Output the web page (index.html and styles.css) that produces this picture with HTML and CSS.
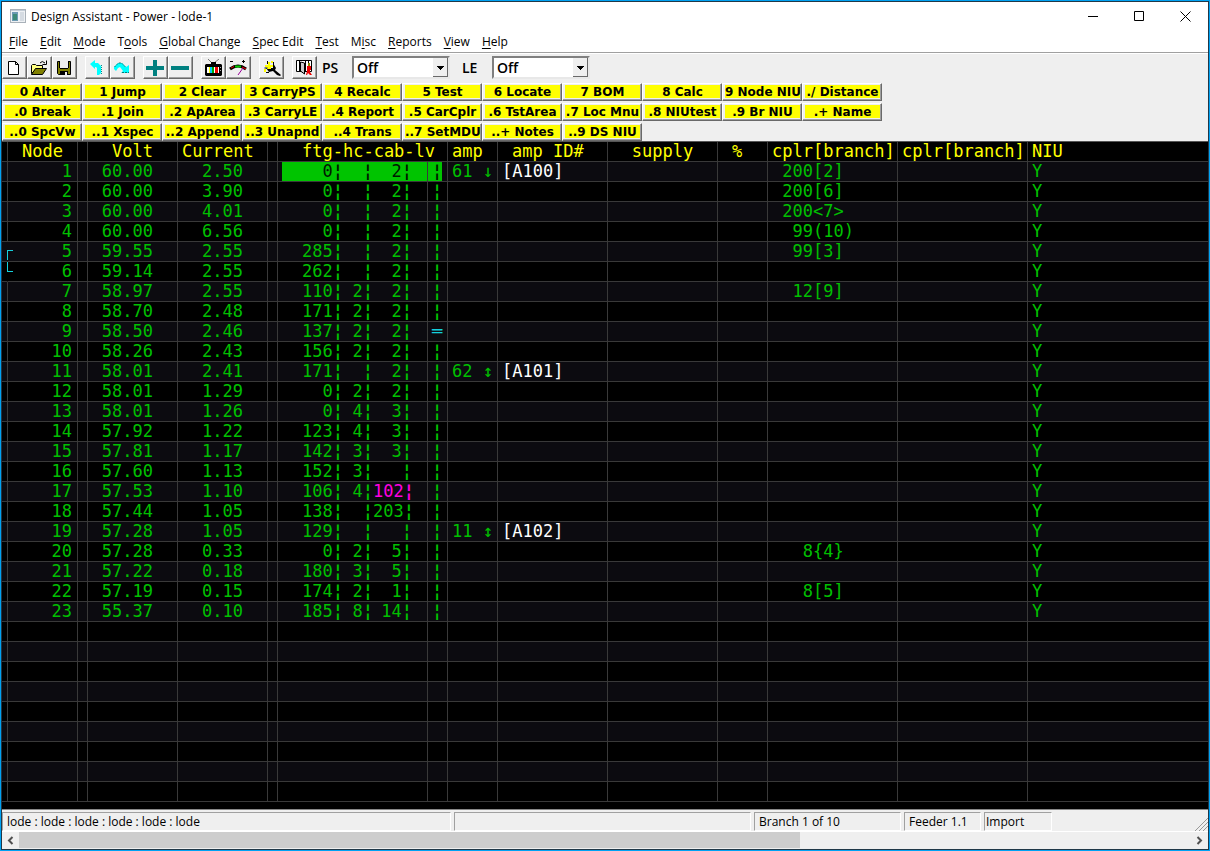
FILE: index.html
```html
<!DOCTYPE html>
<html lang="en">
<head>
<meta charset="utf-8">
<title>Design Assistant - Power - lode-1</title>
<link rel="stylesheet" href="styles.css">
</head>
<body>
<div class="window">
  <header class="titlebar">
    <svg class="app-icon" width="16" height="14" viewBox="0 0 16 14"><path fill="#a9b1b9" d="M0 0h16v14H0z"/><path fill="#eef1f4" d="M1 2h14v11H1z"/><path fill="#c3ccd6" d="M1 1h14v1H1z"/><path fill="#6c9ab2" d="M2 3h6v9H2z"/><path fill="#3d8a78" d="M3 5h4v6H3z"/><path fill="#d5dbe2" d="M10 3h4v9h-4z"/></svg>
    <h1 class="title">Design Assistant - Power - lode-1</h1>
    <div class="window-controls">
      <button aria-label="Minimize"><svg width="11" height="11" viewBox="0 0 11 11"><path fill="#000" d="M0 5h10v1H0z"/></svg></button>
      <button aria-label="Maximize"><svg width="11" height="11" viewBox="0 0 11 11"><path fill="none" stroke="#000" d="M.5 .5h9v9h-9z"/></svg></button>
      <button aria-label="Close"><svg width="11" height="11" viewBox="0 0 11 11"><path stroke="#000" d="M.5 .5l10 10M10.500 .5l-10 10"/></svg></button>
    </div>
  </header>

  <nav class="menubar" aria-label="Main menu">
    <button><u>F</u>ile</button><button><u>E</u>dit</button><button><u>M</u>ode</button><button>T<u>o</u>ols</button><button><u>G</u>lobal Change</button><button><u>S</u>pec Edit</button><button><u>T</u>est</button><button>M<u>i</u>sc</button><button><u>R</u>eports</button><button><u>V</u>iew</button><button><u>H</u>elp</button>
  </nav>

  <div class="toolbar">
    <div class="tool-group">
      <button class="tool" aria-label="New"><svg width="20" height="18" viewBox="0 0 20 18"><path fill="#fff" stroke="#000" d="M4.500 2.500h7l3 3v10h-10zM11.500 2.500v3h3"/></svg></button>
      <button class="tool" aria-label="Open"><svg width="20" height="18" viewBox="0 0 20 18"><path fill="#ffff80" stroke="#000" d="M2.500 14.500v-8l1-1h3l1 1h6v3h-6z"/><path fill="#808000" stroke="#000" d="M2.500 15.500l4-6h11l-4 6z"/><path fill="none" stroke="#000" d="M11 4q2-3 5 0M17.500 1.500v4h-4"/></svg></button>
      <button class="tool" aria-label="Save"><svg width="20" height="18" viewBox="0 0 20 18"><path fill="#808000" stroke="#000" d="M3.500 2.500h13v13h-12l-1-1z"/><path fill="#efefef" d="M6 2h8v7H6z"/><path fill="#000" d="M5 2h1v7H5zM14 2h1v7h-1zM6 9h8v1H6zM6 12h8v4H6z"/><path fill="#efefef" d="M11 13h2v3h-2z"/></svg></button>
    </div>
    <div class="tool-group">
      <button class="tool" aria-label="Back"><svg width="20" height="18" viewBox="0 0 20 18"><path fill="#0ff" d="M3 5l5-4v3h3l3 3v7l-2 2h-2V9L9 8H8v2z"/><path fill="none" stroke="#008b8b" stroke-dasharray="1 1" d="M14.500 6v9"/></svg></button>
      <button class="tool" aria-label="Forward"><svg width="20" height="18" viewBox="0 0 20 18"><path fill="#0ff" d="M2 10V8l4-4h4l4 4 3-2v8H9l2-2-3-4-2 1-2 3z"/><path fill="none" stroke="#087878" stroke-dasharray="2 1" d="M2.500 8l4-4h3l4 4M10 13.500h7"/></svg></button>
    </div>
    <div class="tool-group">
      <button class="tool" aria-label="Add"><svg width="20" height="18" viewBox="0 0 20 18"><path fill="#008080" d="M8 1h4v6h7v4h-7v6H8v-6H1V7h7z"/></svg></button>
      <button class="tool" aria-label="Remove"><svg width="20" height="18" viewBox="0 0 20 18"><path fill="#008080" d="M1 7h18v4H1z"/></svg></button>
    </div>
    <div class="tool-group">
      <button class="tool" aria-label="Television"><svg width="20" height="18" viewBox="0 0 20 18"><path fill="none" stroke="#777" d="M5 0l4 4h2l5-4"/><path fill="#000" d="M2 6l1-1h15l1 1v10l-1 1H3l-1-1zM8 3h5v2H8z"/><path fill="#fff" d="M4 8h12v6H4z"/><path fill="#ff0" d="M6 8h1v6H6z"/><path fill="#0cf" d="M7 8h2v6H7z"/><path fill="#0a0" d="M9 8h2v6H9z"/><path fill="#e00" d="M12 8h3v6h-3z"/><path fill="#aaa" d="M17 8h1v1h-1zM17 11h1v1h-1z"/></svg></button>
      <button class="tool" aria-label="Signal"><svg width="20" height="18" viewBox="0 0 20 18"><path fill="none" stroke="#000" stroke-width="3" d="M2 10q8-6 16 0"/><path fill="none" stroke="#e00" d="M3 9l3-1.500M14 8l4 2"/><path fill="none" stroke="#0c0" stroke-width="2" d="M7 7.500h6"/><path fill="none" stroke="#909" stroke-width="1" d="M15 9l-5 7"/><path stroke="#000" d="M2 2.500h3M14 2.500h3M15.500 1v3"/></svg></button>
    </div>
    <div class="tool-group">
      <button class="tool" aria-label="Find"><svg width="20" height="18" viewBox="0 0 20 18"><path fill="#000" d="M5 9h7V4l3 5-1 2 6 5-1 1-3-1-4-4-4 1z"/><path fill="#ff0" d="M7 3h2v3h3v2h-2v2H6V8H4V6h3zM3 10h2v3H3zM10 2h2v2h-2z"/><path fill="none" stroke="#000" d="M6.500 2v3M12.500 3v4M3.500 9h3M5 13.500h3"/></svg></button>
    </div>
    <div class="tool-group">
      <button class="tool" aria-label="Exit"><svg width="20" height="18" viewBox="0 0 20 18"><path fill="#fff" stroke="#000" d="M2.500 1.500h15v11h-15zM5.500 2v10M8.500 4v9M11.500 2v10M14.500 2v3"/><path fill="#ccc" stroke="#000" d="M6.500 3l4 1v11l-4-3z"/><path fill="#880" d="M14 4h2v3h-2z"/><path fill="#e00" d="M13 7h4v4h-1v2l2 3h-2l-2-2-1 2h-1l1-4z"/></svg></button>
    </div>
    <label class="combo-label" for="ps">PS</label>
    <select class="combo" id="ps"><option>Off</option></select>
    <label class="combo-label" for="le">LE</label>
    <select class="combo" id="le"><option>Off</option></select>
  </div>

  <div class="keys">
    <div class="key-row"><button>0 Alter</button><button>1 Jump</button><button>2 Clear</button><button>3 CarryPS</button><button>4 Recalc</button><button>5 Test</button><button>6 Locate</button><button>7 BOM</button><button>8 Calc</button><button>9 Node NIU</button><button>./ Distance</button></div>
    <div class="key-row"><button>.0 Break</button><button>.1 Join</button><button>.2 ApArea</button><button>.3 CarryLE</button><button>.4 Report</button><button>.5 CarCplr</button><button>.6 TstArea</button><button>.7 Loc Mnu</button><button>.8 NIUtest</button><button>.9 Br NIU</button><button>.+ Name</button></div>
    <div class="key-row"><button>..0 SpcVw</button><button>..1 Xspec</button><button>..2 Append</button><button>..3 Unapnd</button><button>..4 Trans</button><button>..7 SetMDU</button><button>..+ Notes</button><button>..9 DS NIU</button></div>
  </div>

  <main class="sheet">
    <table class="grid">
      <colgroup><col class="w6"><col class="w70"><col class="w10"><col class="w90"><col class="w90"><col class="w10"><col class="w65"><col class="w30"><col class="w55"><col class="w20"><col class="w50"><col class="w110"><col class="w110"><col class="w50"><col class="w130"><col class="w130"><col></colgroup>
      <thead><tr><th></th><th class="node-head">Node</th><th></th><th class="volt-head">Volt</th><th class="current-head">Current</th><th></th><th class="ftg-head" colspan="4">ftg-hc-cab-lv</th><th>amp</th><th class="id-head">amp ID#</th><th class="center">supply</th><th class="percent-head">%</th><th>cplr[branch]</th><th>cplr[branch]</th><th>NIU</th></tr></thead>
      <tbody id="rows"></tbody>
    </table>
  </main>

  <footer class="status">
    <div class="panel path">lode : lode : lode : lode : lode : lode</div>
    <div class="panel message"></div>
    <div class="panel branch">Branch 1 of 10</div>
    <div class="panel feeder">Feeder 1.1</div>
    <div class="panel import">Import</div>
    <svg class="grip" width="14" height="14" viewBox="0 0 14 14"><path stroke="#999" stroke-width="1" d="M1 14L14 1M5 14l9-9M9 14l5-5"/></svg>
  </footer>
  <div class="scrollbar">
    <button aria-label="Scroll left"><svg width="7" height="9" viewBox="0 0 7 9"><path fill="none" stroke="#505050" stroke-width="2" d="M5.500 1L2 4.500 5.500 8"/></svg></button>
    <div class="track"><div class="thumb"></div></div>
    <button aria-label="Scroll right"><svg width="7" height="9" viewBox="0 0 7 9"><path fill="none" stroke="#505050" stroke-width="2" d="M1.500 1L5 4.500 1.500 8"/></svg></button>
  </div>
</div>
<script src="grid.js"></script>
</body>
</html>
```
FILE: styles.css
```css
* { box-sizing: border-box; }
body { margin: 0; font-family: "Open Sans", "Noto Sans", sans-serif; font-size: 12px; color: #000; }
button { font: inherit; color: inherit; border: 0; padding: 0; margin: 0; background: none; }
svg { display: block; flex: none; }

.window { display: flex; flex-direction: column; min-height: 100vh; border: 1px solid #00a2f3; box-shadow: inset 0 0 0 1px #203848; padding: 1px; background: #efefef; }

.titlebar { display: flex; align-items: center; height: 28px; padding-left: 8px; background: #fff; }
.title { flex: 1; margin: 0 0 0 5px; font-size: 12px; font-weight: 400; }
.window-controls { display: flex; height: 100%; }
.window-controls button { display: flex; align-items: center; justify-content: center; width: 46px; }

.menubar { display: flex; gap: 12px; height: 22px; padding-left: 7px; background: #fff; line-height: 24px; }
.menubar button { line-height: 24px; }
.menubar u { text-underline-offset: 2px; }

.toolbar { display: flex; align-items: center; height: 31px; border-top: 1px solid #a0a0a0; box-shadow: inset 0 1px #fff; padding-bottom: 1px; }
.tool-group { display: flex; margin-right: 8px; }
.tool { display: flex; align-items: center; justify-content: center; width: 25px; height: 23px; padding-right: 1px; border: 1px solid; border-color: #fff #696969 #696969 #fff; box-shadow: inset -1px -1px #a0a0a0; background: #efefef; }
.combo-label { flex: none; width: 30px; font-size: 14px; font-weight: 600; margin-left: -3px; }
.combo { flex: none; width: 98px; height: 23px; margin-right: 15px; padding: 0 3px; font-family: inherit; font-size: 14px; font-weight: 600; color: #000; appearance: none; border: 2px solid; border-color: #808080 #e8e8e8 #e8e8e8 #808080; border-radius: 0;
  background: linear-gradient(#000, #000) no-repeat right 4px top 8px / 7px 1px, linear-gradient(#000, #000) no-repeat right 5px top 9px / 5px 1px, linear-gradient(#000, #000) no-repeat right 6px top 10px / 3px 1px, linear-gradient(#000, #000) no-repeat right 7px top 11px / 1px 1px, linear-gradient(#696969, #696969) no-repeat right / 1px 100%, linear-gradient(#696969, #696969) no-repeat bottom right / 15px 1px, linear-gradient(#efefef, #efefef) no-repeat right / 15px 100%, #fff; }

.keys { display: flex; flex-direction: column; gap: 2px; }
.key-row { display: flex; }
.key-row button { width: 80px; height: 18px; padding: 1px 1px 2px 2px; border: 1px solid; border-color: #fff #696969 #696969 #fff; box-shadow: inset -1px -1px #a0a0a0; background: #ff0 content-box; font-family: "DejaVu Sans", sans-serif; font-size: 12px; font-weight: 700; line-height: 15px; white-space: nowrap; }

.sheet { flex: 1; background: #000; border-top: 1px solid #555; }
.grid { width: 100%; table-layout: fixed; border-collapse: separate; border-spacing: 0; font-family: "DejaVu Sans Mono", monospace; font-size: 17px; line-height: 19px; }
.grid th, .grid td { height: 20px; padding: 0 0 0 4px; border: solid #393939; border-width: 0 1px 1px 0; font-weight: 400; text-align: left; white-space: pre; color: #00c000; }
.grid th:last-child, .grid td:last-child { border-right: 0; }
.grid th { color: #ff0; }
.grid tbody tr:nth-child(odd) { background: #0c0b10; }
.w6 { width: 6px; } .w10 { width: 10px; } .w20 { width: 20px; } .w30 { width: 30px; } .w50 { width: 50px; } .w55 { width: 55px; } .w65 { width: 65px; } .w70 { width: 70px; } .w90 { width: 90px; } .w110 { width: 110px; } .w130 { width: 130px; }
.grid .center { text-align: center; padding: 0; }
.grid .percent-head { padding-left: 14px; }
.grid .node-head { text-align: right; padding-right: 14px; }
.grid .volt-head, .grid .volt, .grid .current { text-align: right; padding-right: 24px; }
.grid .current-head { padding-left: 4px; }
.grid .id-head { padding-left: 14px; }
.grid .ftg-head { padding-left: 24px; }
.grid .node { text-align: right; padding-right: 5px; }
.grid .ftg, .grid .hc { text-align: right; border-right: 0; padding: 0; }
.grid .cab { text-align: right; padding: 0 15px 0 0; }
.grid .amp-id { color: #fff; }
.grid .magenta { color: #ff00e0; }
.grid .cyan { color: #14d0dc; }
.bar { font-weight: 700; }
.grid .selected td.ftg, .grid .selected td.hc, .grid .selected td.cab, .grid .selected td.lv { color: #001800; background: linear-gradient(#00c400, #00c400) no-repeat left / 100% 100%; }
.grid .selected td.ftg { background-position: right; background-size: 61px 100%; }
.grid .selected td.lv { background-size: 14px 100%; }
.grid .join-start, .grid .join-end { position: relative; border-right-color: transparent; }
.join-start::after, .join-end::after { content: ""; position: absolute; left: 5px; width: 5px; height: 9px; border: solid #14d0dc; }
.grid .join-start::after { top: 8px; border-width: 1px 0 0 1px; }
.grid .join-end::after { top: 0; border-width: 0 0 1px 1px; }

.status { display: flex; gap: 3px; height: 23px; padding-top: 2px; border-top: 1px solid #888; border-bottom: 1px solid #fff; }
.panel { flex: none; height: 19px; padding-left: 4px; border: 1px solid; border-color: #a0a0a0 #fff #fff #a0a0a0; line-height: 17px; white-space: nowrap; }
.path { width: 449px; } .message { width: 297px; } .branch { width: 147px; } .feeder { width: 77px; } .import { width: 68px; padding-left: 1px; }
.grip { margin: 5px 0 0 auto; }
.scrollbar { display: flex; height: 17px; padding-bottom: 1px; background: #efefef; }
.scrollbar button { display: flex; align-items: center; justify-content: center; width: 17px; }
.track { flex: 1; }
.thumb { width: 66.6%; height: 100%; background: #cdcdcd; }
```
FILE: grid.js
```js
// node, volt, current, ftg, hc, cab, amp, amp id, coupler
const nodes = [
  [1, "60.00", "2.50", "0", "", "2", "61 ↓", "[A100]", " 200[2]"],
  [2, "60.00", "3.90", "0", "", "2", "", "", " 200[6]"],
  [3, "60.00", "4.01", "0", "", "2", "", "", " 200<7>"],
  [4, "60.00", "6.56", "0", "", "2", "", "", "  99(10)"],
  [5, "59.55", "2.55", "285", "", "2", "", "", "  99[3]"],
  [6, "59.14", "2.55", "262", "", "2", "", "", ""],
  [7, "58.97", "2.55", "110", "2", "2", "", "", "  12[9]"],
  [8, "58.70", "2.48", "171", "2", "2", "", "", ""],
  [9, "58.50", "2.46", "137", "2", "2", "", "", ""],
  [10, "58.26", "2.43", "156", "2", "2", "", "", ""],
  [11, "58.01", "2.41", "171", "", "2", "62 ↕", "[A101]", ""],
  [12, "58.01", "1.29", "0", "2", "2", "", "", ""],
  [13, "58.01", "1.26", "0", "4", "3", "", "", ""],
  [14, "57.92", "1.22", "123", "4", "3", "", "", ""],
  [15, "57.81", "1.17", "142", "3", "3", "", "", ""],
  [16, "57.60", "1.13", "152", "3", "", "", "", ""],
  [17, "57.53", "1.10", "106", "4", "102", "", "", ""],
  [18, "57.44", "1.05", "138", "", "203", "", "", ""],
  [19, "57.28", "1.05", "129", "", "", "11 ↕", "[A102]", ""],
  [20, "57.28", "0.33", "0", "2", "5", "", "", "   8{4}"],
  [21, "57.22", "0.18", "180", "3", "5", "", "", ""],
  [22, "57.19", "0.15", "174", "2", "1", "", "", "   8[5]"],
  [23, "55.37", "0.10", "185", "8", "14", "", "", ""]
];
const ROWS = 32;
const body = document.getElementById("rows");

function addCell(row, text, name, bar) {
  const cell = row.insertCell();
  cell.textContent = text;
  if (name) cell.className = name;
  if (bar) {
    const mark = document.createElement("span");
    mark.className = "bar";
    mark.textContent = "¦";
    cell.append(mark);
  }
}

for (let i = 0; i < ROWS; i++) {
  const row = body.insertRow();
  const n = nodes[i];
  const [id, volt, current, ftg, hc, cab, amp, ampId, coupler] = n || Array(9).fill("");
  const bar = Boolean(n);
  if (id === 1) row.className = "selected";
  addCell(row, "", id === 5 ? "join-start" : id === 6 ? "join-end" : "");
  addCell(row, id, "node");
  addCell(row, "");
  addCell(row, volt, "volt");
  addCell(row, current, "current");
  addCell(row, "");
  addCell(row, ftg, "ftg", bar);
  addCell(row, hc, "hc", bar);
  addCell(row, cab, cab === "102" ? "cab magenta" : "cab", bar);
  addCell(row, id === 9 ? "═" : "", id === 9 ? "lv cyan" : "lv", bar && id !== 9);
  addCell(row, amp);
  addCell(row, ampId, "amp-id");
  addCell(row, "");
  addCell(row, "");
  addCell(row, coupler);
  addCell(row, "");
  addCell(row, n ? "Y" : "");
}
```
